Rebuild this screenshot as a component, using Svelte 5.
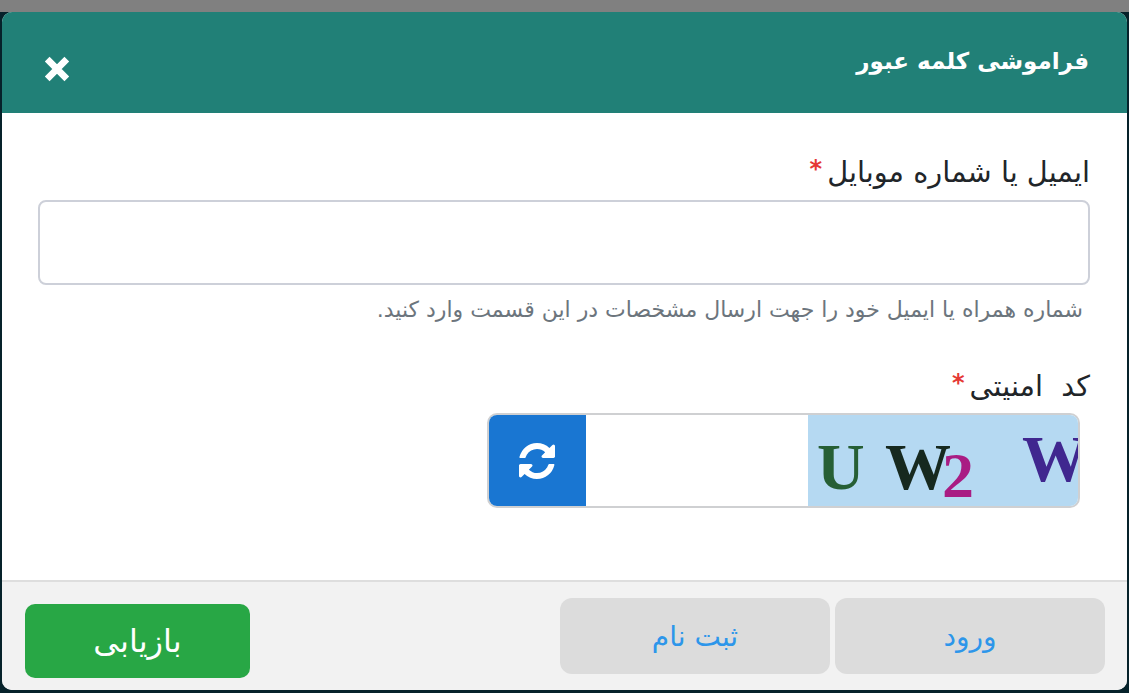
<script lang="ts">
  let contact = $state("");
  let code = $state("");
</script>

<div class="page">
  <section class="modal" dir="rtl">
    <header>
      <h2>فراموشی کلمه عبور</h2>
      <button class="close" aria-label="بستن">
        <svg viewBox="0 0 26 26" width="30" height="30">
          <path d="M4.500 4.500 21.500 21.500M21.500 4.500 4.500 21.500" stroke="#fff" stroke-width="5.800" fill="none" />
        </svg>
      </button>
    </header>

    <div class="body">
      <label class="field-label" for="contact">ایمیل یا شماره موبایل<span class="req">*</span></label>
      <input id="contact" class="text" type="text" bind:value={contact} />
      <p class="hint">شماره همراه یا ایمیل خود را جهت ارسال مشخصات در این قسمت وارد کنید.</p>

      <label class="field-label second" for="code">کد امنیتی<span class="req">*</span></label>
      <div class="captcha" dir="ltr">
        <button class="refresh" aria-label="refresh">
          <svg viewBox="0 0 1536 1536" width="36" height="36">
            <path fill="#fff" d="M1511 928q0 5-1 7-64 268-268 434.500T764 1536q-146 0-282.500-55T238 1324l-129 129q-19 19-45 19t-45-19-19-45V960q0-26 19-45t45-19h448q26 0 45 19t19 45-19 45l-137 137q71 66 161 102t187 36q134 0 250-65t186-179q11-17 53-117 8-23 30-23h192q13 0 22.500 9.500t9.500 22.500zm25-800v448q0 26-19 45t-45 19h-448q-26 0-45-19t-19-45 19-45l138-138Q969 256 768 256q-134 0-250 65T332 500q-11 17-53 117-8 23-30 23H50q-13 0-22.500-9.500T18 608v-7q65-268 270-434.500T768 0q146 0 284 55.500T1297 212l130-129q19-19 45-19t45 19 19 45z" />
          </svg>
        </button>
        <input id="code" class="code" type="text" bind:value={code} />
        <div class="captcha-img" aria-hidden="true">
          <span class="ch u">U</span>
          <span class="ch w">W</span>
          <span class="ch two">2</span>
          <span class="ch w2">W</span>
        </div>
      </div>
    </div>

    <footer>
      <div class="links">
        <button class="link">ورود</button>
        <button class="link">ثبت نام</button>
      </div>
      <button class="submit">بازیابی</button>
    </footer>
  </section>
</div>

<style>
  :global(body) {
    margin: 0;
    background: #06222a;
  }
  .page {
    height: 693px;
    padding: 12px 2px 3px;
    box-sizing: border-box;
    overflow: hidden;
    background: linear-gradient(#808080 0 12px, #06222a 12px);
    font-family: "DejaVu Sans", sans-serif;
  }
  .modal {
    height: 678px;
    display: flex;
    flex-direction: column;
    background: #fff;
    border-radius: 10px;
    overflow: hidden;
  }
  header {
    height: 101px;
    flex: none;
    display: flex;
    justify-content: space-between;
    align-items: center;
    padding: 0 38px 0 40px;
    background: #218077;
    color: #fff;
  }
  h2 {
    margin: -3px 0 0;
    font-size: 23px;
    font-weight: bold;
  }
  .close {
    display: flex;
    margin: 13px 0 0;
    padding: 0;
    background: none;
    border: none;
    cursor: pointer;
  }
  .body {
    flex: 1;
    padding: 41px 37px 0 36px;
    color: #212529;
  }
  .field-label {
    display: block;
    font-size: 28.800px;
    line-height: 36px;
    margin-bottom: 10px;
  }
  .req {
    margin-right: 5px;
    font-size: 24px;
    font-weight: bold;
    line-height: 0;
    vertical-align: 5px;
    color: #e53935;
  }
  .text {
    display: block;
    width: 100%;
    height: 85px;
    box-sizing: border-box;
    border: 2px solid #cdd0d9;
    border-radius: 8px;
    background: #fff;
  }
  .hint {
    margin: 10px 7px 0 0;
    font-size: 22px;
    line-height: 30px;
    color: #6c757d;
  }
  .second {
    margin-top: 43px;
    margin-bottom: 9px;
    word-spacing: 9px;
  }
  .captcha {
    width: 593px;
    height: 95px;
    margin-right: 10px;
    display: flex;
    box-sizing: border-box;
    border: 2px solid #cfd0d2;
    border-radius: 10px;
    overflow: hidden;
  }
  .refresh {
    width: 98px;
    flex: none;
    display: flex;
    align-items: center;
    justify-content: center;
    margin: -2px 0 -2px -1px;
    padding: 0;
    background: #1976d2;
    border: none;
    cursor: pointer;
  }
  .code {
    flex: 1;
    min-width: 0;
    border: none;
    outline: none;
    background: #fff;
  }
  .captcha-img {
    position: relative;
    width: 272px;
    flex: none;
    margin: -2px -2px -2px 0;
    background: #b5d9f2;
    overflow: hidden;
    font-family: "Liberation Serif", serif;
    font-weight: bold;
    filter: blur(0.5px);
  }
  .ch {
    position: absolute;
    line-height: 1;
    font-size: 66px;
  }
  .u {
    left: 9px;
    top: 21px;
    color: #265f35;
  }
  .w {
    left: 77px;
    top: 21px;
    color: #16291f;
  }
  .two {
    left: 134px;
    top: 31px;
    font-size: 64px;
    color: #a91c83;
  }
  .w2 {
    left: 214px;
    top: 13px;
    color: #40278f;
  }
  footer {
    height: 110px;
    flex: none;
    box-sizing: border-box;
    display: flex;
    justify-content: space-between;
    padding: 16px 22px 0 23px;
    background: #f2f2f2;
    border-top: 2px solid #dedede;
  }
  .links {
    display: flex;
    gap: 5px;
  }
  .link {
    width: 270px;
    height: 76px;
    border: none;
    border-radius: 12px;
    background: #dcdcdc;
    color: #2d96ea;
    font-family: inherit;
    font-size: 28px;
    cursor: pointer;
  }
  .submit {
    width: 225px;
    height: 74px;
    margin-top: 6px;
    border: none;
    border-radius: 10px;
    background: #28a745;
    color: #fff;
    font-family: inherit;
    font-size: 32px;
    cursor: pointer;
  }
</style>
